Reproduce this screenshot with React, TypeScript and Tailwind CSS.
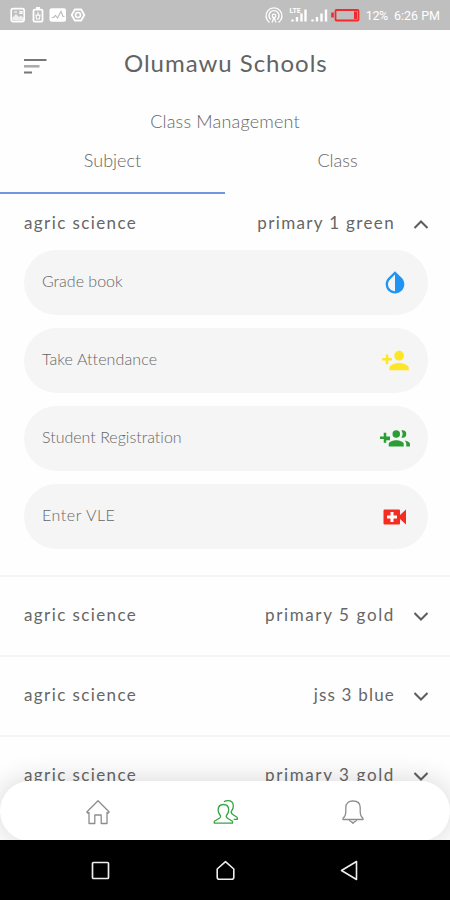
import React from "react";
import { MdInvertColors, MdPersonAdd } from "react-icons/md";

type Course = { subject: string; group: string; tracking: string };

const courses: Course[] = [
  { subject: "agric science", group: "primary 5 gold", tracking: "tracking-[1.63px]" },
  { subject: "agric science", group: "jss 3 blue", tracking: "tracking-[1.2px]" },
  { subject: "agric science", group: "primary 3 gold", tracking: "tracking-[1.63px]" },
];

function StatusBar() {
  return (
    <header className="flex h-[30px] shrink-0 items-center bg-[#bfbfbf] pl-[10px] pr-[10px] text-white">
      <svg width="76" height="16" viewBox="0 0 76 16" fill="none" stroke="currentColor">
        <rect x="1.2" y="1.6" width="13" height="13" rx="2" strokeWidth="1.6" />
        <path d="M2 11l4-4 3 3 2-1.500 3 3v2H3z" fill="currentColor" fillOpacity=".75" stroke="none" />
        <path d="M4 5h3M10 4.500h2v2h-2z" strokeWidth="1.200" />
        <path d="M26 1h4" strokeWidth="2" />
        <rect x="23.500" y="2.600" width="9" height="12" rx="1.200" strokeWidth="1.800" />
        <path d="M28 5v4M26 8h4l-.6 4h-2.800z" strokeWidth="1.100" />
        <rect x="39.500" y="1.200" width="16.500" height="13.500" rx="2" fill="currentColor" stroke="none" />
        <path d="M41.500 10.500h2l2-2 2 2.500 3.500-6.500 2 5h1.500" stroke="#bfbfbf" strokeWidth="1.200" />
        <path d="M64.800 2.500h6.400l3.100 5.500-3.100 5.500h-6.400L61.700 8z" strokeWidth="1.800" strokeLinejoin="round" />
        <circle cx="68" cy="8" r="2.500" strokeWidth="1.600" />
      </svg>
      <svg className="ml-auto" width="97" height="22" viewBox="0 0 97 22" fill="none" stroke="currentColor">
        <g transform="translate(2 0)">
          <path d="M4.500 18.500A8 8 0 1 1 13.500 18.500M5.800 15.500A5 5 0 1 1 12.200 15.500" strokeWidth="1.400" />
          <circle cx="9" cy="12" r="1.800" strokeWidth="1.200" />
          <path d="M7 18.500l2-5 2 5" strokeWidth="1.300" />
        </g>
        <g transform="translate(3 0)">
          <path d="M26.500 17.500v-2M31 17.500v-4.500M35.500 17.500V9.500M39.500 17.500V5.500" strokeWidth="2.400" />
          <text x="23.500" y="8.500" fill="currentColor" stroke="none" fontSize="7" fontWeight="700" fontFamily="Roboto, sans-serif">LTE</text>
          <path d="M46.500 17.500v-2M51 17.500v-4.500M55.500 17.500V9.500M60 17.500V5.500" strokeWidth="2.400" />
        </g>
        <g transform="translate(2 0)">
          <path d="M67.500 8.500v5" stroke="#f02b2f" strokeWidth="2.600" />
          <rect x="70.500" y="6" width="23" height="10.500" rx="1" stroke="#f02b2f" strokeWidth="1.800" />
          <path d="M90.500 7.500v7.500" stroke="#f02b2f" strokeWidth="3" />
        </g>
      </svg>
      <div className="ml-[6px] flex gap-[6px] pt-[3px] font-[Roboto,sans-serif] text-[12.500px] leading-none">
        <span className="tracking-[-0.3px]">12%</span>
        <span>6:26 PM</span>
      </div>
    </header>
  );
}

function Chevron({ up = false }: { up?: boolean }) {
  return (
    <svg width="16" height="16" viewBox="0 0 16 16" fill="none" stroke="#5e5e5e" strokeWidth="2.100">
      <path d={up ? "M1.500 12L8 5.500l6.500 6.500" : "M1.500 5L8 11.500l6.500-6.500"} />
    </svg>
  );
}

function CourseRow({ course, open = false }: { course: Course; open?: boolean }) {
  return (
    <div className="flex items-center justify-between pl-6 pr-[21px] text-[17px] leading-5 text-[#666]">
      <span className="-mt-px tracking-[1.4px]">{course.subject}</span>
      <div className="flex items-center gap-[18px]">
        <span className={`-mt-px ${course.tracking}`}>{course.group}</span>
        <Chevron up={open} />
      </div>
    </div>
  );
}

function GroupAddIcon() {
  return (
    <svg width="30" height="32" viewBox="0 0 24 24" fill="#2a9d35">
      <path d="M13 13c-2 0-6 1-6 3v2h12v-2c0-2-4-3-6-3m6.620.160C20.450 13.880 21 14.820 21 16v2h3v-2c0-1.540-2.370-2.500-4.380-2.840M13 11a3 3 0 0 0 0-6 3 3 0 0 0 0 6m5 0a3 3 0 0 0 0-6c-.320 0-.630.050-.910.140a5 5 0 0 1 0 5.720c.280.090.590.140.910.140M8 10H5V7H3v3H0v2h3v3h2v-2h3z" />
    </svg>
  );
}

function VideoPlusIcon() {
  return (
    <svg width="26" height="20" viewBox="0 0 26 20" fill="none">
      <path d="M2.500 2.500h14.500q1 0 1 1V8l6-5.500v15L18 12v4.500q0 1-1 1H2.500q-1 0-1-1v-13q0-1 1-1z" fill="#f52d20" />
      <path d="M10 5v10M5 10h10" stroke="#fff" strokeWidth="3" />
    </svg>
  );
}

function Action({ children, label }: { children: React.ReactNode; label: React.ReactNode }) {
  return (
    <div className="flex h-[65px] items-center justify-between rounded-full bg-[#f5f5f5] pl-[18px] pr-[17px] text-[16px] text-[#666]">
      <span className="-mt-[3px] [font-variant-ligatures:none]">{label}</span>
      <span className="flex w-8 items-center justify-center">{children}</span>
    </div>
  );
}

function TabBar() {
  return (
    <nav className="absolute inset-x-0 -bottom-px flex h-[60px] items-center rounded-[30px] bg-white shadow-[0_0_24px_4px_rgba(0,0,0,0.12)]">
      <svg className="ml-[84px] mt-0.5" width="28" height="28" viewBox="0 0 28 28" fill="none" stroke="#8d8d8d" strokeWidth="1.300" strokeLinejoin="round">
        <path d="M2.800 14L14 2.800 25.200 14l-1.300 1.200-.900-.800V25.500h-5.800V17h-6.400v8.500H5V14.400l-.900.800z" />
      </svg>
      <svg className="ml-[99px] mt-0.5" width="30" height="28" viewBox="0 0 30 28" fill="none" stroke="#35a640" strokeWidth="1.300" strokeLinejoin="round">
        <path d="M3.300 25.200v-2l4.700-2.700c1.800-1 2-2.200 1-3.500-1.200-1.600-1.900-3.200-1.900-5 0-3.400 2.100-5.500 5.300-5.500s5.300 2.100 5.300 5.500c0 1.800-.7 3.400-1.900 5-1 1.300-.8 2.500 1 3.500l4.700 2.700v2z" />
        <path d="M13 3.800c1-.8 2.300-1.200 3.800-1.200 3.400 0 5.500 2.100 5.500 5.300 0 1.800-.6 3.300-1.500 4.700-1 1.500-.8 2.700.7 3.700l4.800 3.200v1.900h-3.600" />
      </svg>
      <svg className="ml-[98px] mt-0.5" width="28" height="28" viewBox="0 0 28 28" fill="none" stroke="#8d8d8d" strokeWidth="1.300" strokeLinejoin="round">
        <path d="M4 21.500v-1.300c1.700-1.300 2.800-3.500 2.800-7V9.500c0-4 2.700-6.500 7.200-6.500s7.200 2.500 7.200 6.500v3.700c0 3.500 1.100 5.700 2.800 7v1.300zM10 21.500c.3 1.700 1.700 2.200 2.800 2.500L14 25.300l1.200-1.300c1.100-.3 2.500-.8 2.800-2.500" />
      </svg>
    </nav>
  );
}

function SystemNav() {
  return (
    <footer className="flex h-[60px] shrink-0 items-center bg-black">
      <svg className="ml-[90px]" width="21" height="21" viewBox="0 0 21 21" fill="none" stroke="#eee" strokeWidth="1.700">
        <rect x="2.500" y="2.500" width="16" height="16" rx="1" />
      </svg>
      <svg className="ml-[103px]" width="23" height="23" viewBox="0 0 23 23" fill="none" stroke="#eee" strokeWidth="1.600" strokeLinejoin="round">
        <path d="M3.200 10L11.500 2.700 19.800 10v8.300q0 2-2 2H5.200q-2 0-2-2z" />
      </svg>
      <svg className="ml-[102px]" width="20" height="23" viewBox="0 0 20 23" fill="none" stroke="#eee" strokeWidth="1.600" strokeLinejoin="round">
        <path d="M17.500 2.500v18L2.500 11.500z" />
      </svg>
    </footer>
  );
}

export default function App() {
  return (
    <div className="flex h-[900px] w-[450px] flex-col overflow-hidden bg-[#fefefe] font-[Lato,sans-serif]">
      <StatusBar />
      <main className="relative h-[810px] overflow-hidden">
        <div className="flex h-[68px] items-center">
          <svg className="ml-6 mt-[3px]" width="24" height="16" viewBox="0 0 24 16" fill="none" strokeWidth="2">
            <path d="M0 2h22.500" stroke="#777" />
            <path d="M0 8.300h15.500" stroke="#aaa" strokeWidth="2.500" />
            <path d="M0 14.500h8" stroke="#777" />
          </svg>
          <h1 className="-mt-[3px] ml-[76px] whitespace-nowrap text-[24px] leading-none tracking-[0.97px] text-[#636363]">Olumawu Schools</h1>
        </div>
        <h2 className="mt-[11px] text-center text-[18px] font-light leading-6 tracking-[0.180px] text-[#666]">Class Management</h2>
        <div className="mt-[4px] grid h-[57px] grid-cols-2 text-center text-[18px] font-light text-[#666]">
          <div className="border-b-2 border-[#6e98e4] pt-[11px] leading-6">Subject</div>
          <div className="pt-[11px] leading-6">Class</div>
        </div>
        <section className="h-[383px] border-b-2 border-[#f5f5f5] pt-[20px]">
          <CourseRow open course={{ subject: "agric science", group: "primary 1 green", tracking: "tracking-[1.35px]" }} />
          <div className="ml-6 mr-[22px] mt-[17px] flex flex-col gap-[13px] font-light">
            <Action label={<span>Grade book</span>}><MdInvertColors size={28} color="#2094f3" /></Action>
            <Action label={<span className="tracking-[0.1px]">Take Attendance</span>}><MdPersonAdd size={29} color="#fde628" /></Action>
            <Action label={<span>Student Registration</span>}><GroupAddIcon /></Action>
            <Action label={<span className="tracking-[0.55px]">Enter VLE</span>}><VideoPlusIcon /></Action>
          </div>
        </section>
        {courses.map((course) => (
          <section key={course.group} className="flex h-20 flex-col justify-center border-b-2 border-[#f5f5f5] pb-px">
            <CourseRow course={course} />
          </section>
        ))}
        <TabBar />
      </main>
      <SystemNav />
    </div>
  );
}
